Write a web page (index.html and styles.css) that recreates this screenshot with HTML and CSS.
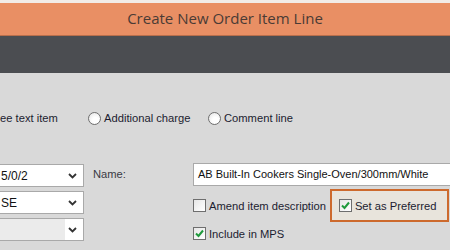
FILE: index.html
```html
<!DOCTYPE html>
<html lang="en">
<head>
    <meta charset="UTF-8">
    <meta name="viewport" content="width=device-width, initial-scale=1.0">
    <title>Create New Order Item Line</title>
    <link rel="stylesheet" href="styles.css">
</head>
<body>
    <div class="dialog">
        <div class="titlebar">Create New Order Item Line</div>
        <div class="toolbar"></div>

        <div class="content">
            <div class="type-row">
                <span class="option option-free">ee text item</span>
                <label class="option option-charge"><span class="radio"></span>Additional charge</label>
                <label class="option"><span class="radio"></span>Comment line</label>
            </div>

            <div class="form">
                <div class="left-col">
                    <div class="select"><span class="select-text">5/0/2</span><svg class="chevron" viewBox="0 0 9 6"><path d="M1 1 L4.5 4.5 L8 1" /></svg></div>
                    <div class="select"><span class="select-text">SE</span><svg class="chevron" viewBox="0 0 9 6"><path d="M1 1 L4.5 4.5 L8 1" /></svg></div>
                    <div class="select disabled"><span class="select-text"></span><svg class="chevron" viewBox="0 0 9 6"><path d="M1 1 L4.5 4.5 L8 1" /></svg></div>
                </div>

                <div class="label-col">
                    <span class="field-label">Name:</span>
                </div>

                <div class="right-col">
                    <div class="textbox">AB Built-In Cookers Single-Oven/300mm/White</div>
                    <div class="check-row">
                        <label class="check"><span class="box"></span>Amend item description</label>
                        <div class="preferred">
                            <label class="check"><span class="box checked"><svg viewBox="0 0 11 11"><path d="M2 5.5 L4.5 8 L9 2.5" /></svg></span>Set as Preferred</label>
                        </div>
                    </div>
                    <label class="check include"><span class="box checked"><svg viewBox="0 0 11 11"><path d="M2 5.5 L4.5 8 L9 2.5" /></svg></span>Include in MPS</label>
                </div>
            </div>
        </div>
    </div>
</body>
</html>
```

FILE: styles.css
```css
* {
    margin: 0;
    padding: 0;
    box-sizing: border-box;
}

body {
    font-family: 'Liberation Sans', Arial, sans-serif;
    font-size: 11.2px;
    background: #d9d9d9;
    width: 450px;
    height: 250px;
    overflow: hidden;
}

.titlebar {
    height: 36px;
    border-top: 3px solid #f2ece8;
    border-bottom: 1px solid #b86f4c;
    background: #e98f64;
    color: #4a3b35;
    font-family: 'Open Sans', sans-serif;
    font-size: 15px;
    text-align: center;
    line-height: 31px;
}

.toolbar {
    height: 37px;
    background: #4b4d51;
}

.content {
    color: #1c1c30;
}

.type-row {
    display: flex;
    align-items: center;
    height: 14px;
    margin-top: 38px;
}

.option {
    display: flex;
    align-items: center;
    gap: 3px;
    flex-shrink: 0;
}

.option-free {
    width: 88px;
}

.option-charge {
    width: 120px;
}

.radio {
    width: 13px;
    height: 13px;
    border: 1px solid #6e6e6e;
    border-radius: 50%;
    background: radial-gradient(circle at 60% 65%, #ffffff 30%, #e2e2e2 100%);
}

.form {
    display: flex;
    margin-top: 39px;
}

.left-col {
    display: flex;
    flex-direction: column;
    gap: 4px;
    flex: 0 0 104px;
    margin-left: -20px;
}

.select {
    display: flex;
    align-items: center;
    height: 23px;
    background: #ffffff;
    border: 1px solid #a9a9a9;
    padding-left: 20px;
    color: #111111;
    font-size: 12px;
}

.select.disabled {
    background: linear-gradient(to right, #ebebeb 0 82%, #ffffff 82%);
}

.select-text {
    flex: 1;
}

.chevron {
    width: 9px;
    height: 6px;
    margin-right: 6px;
    fill: none;
    stroke: #333333;
    stroke-width: 1.8;
}

.label-col {
    flex: 0 0 109px;
    padding-left: 9px;
    padding-top: 4px;
}

.field-label {
    color: #3a3a44;
}

.right-col {
    flex: 1;
    min-width: 0;
    display: flex;
    flex-direction: column;
    margin-top: -1px;
}

.textbox {
    height: 23px;
    line-height: 21px;
    margin-right: -20px;
    padding-left: 4px;
    background: #ffffff;
    border: 1px solid #a9a9a9;
    color: #111111;
    font-size: 11px;
    white-space: nowrap;
}

.check-row {
    display: flex;
    align-items: center;
    margin-top: 3px;
}

.check {
    display: flex;
    align-items: center;
    gap: 3px;
    flex-shrink: 0;
    white-space: nowrap;
}

.box {
    width: 13px;
    height: 13px;
    border: 1px solid #6e6e6e;
    background: linear-gradient(135deg, #e6e6e6, #ffffff);
    display: flex;
    align-items: center;
    justify-content: center;
}

.box svg {
    width: 11px;
    height: 11px;
    fill: none;
    stroke: #1f9a3c;
    stroke-width: 2;
}

.preferred {
    margin-left: 4px;
    height: 33px;
    flex: 0 0 119px;
    padding-left: 7px;
    display: flex;
    align-items: center;
    background: #e8e4dc;
    border: 2px solid #cd6a2d;
}

.include {
    margin-top: 5px;
}
```
